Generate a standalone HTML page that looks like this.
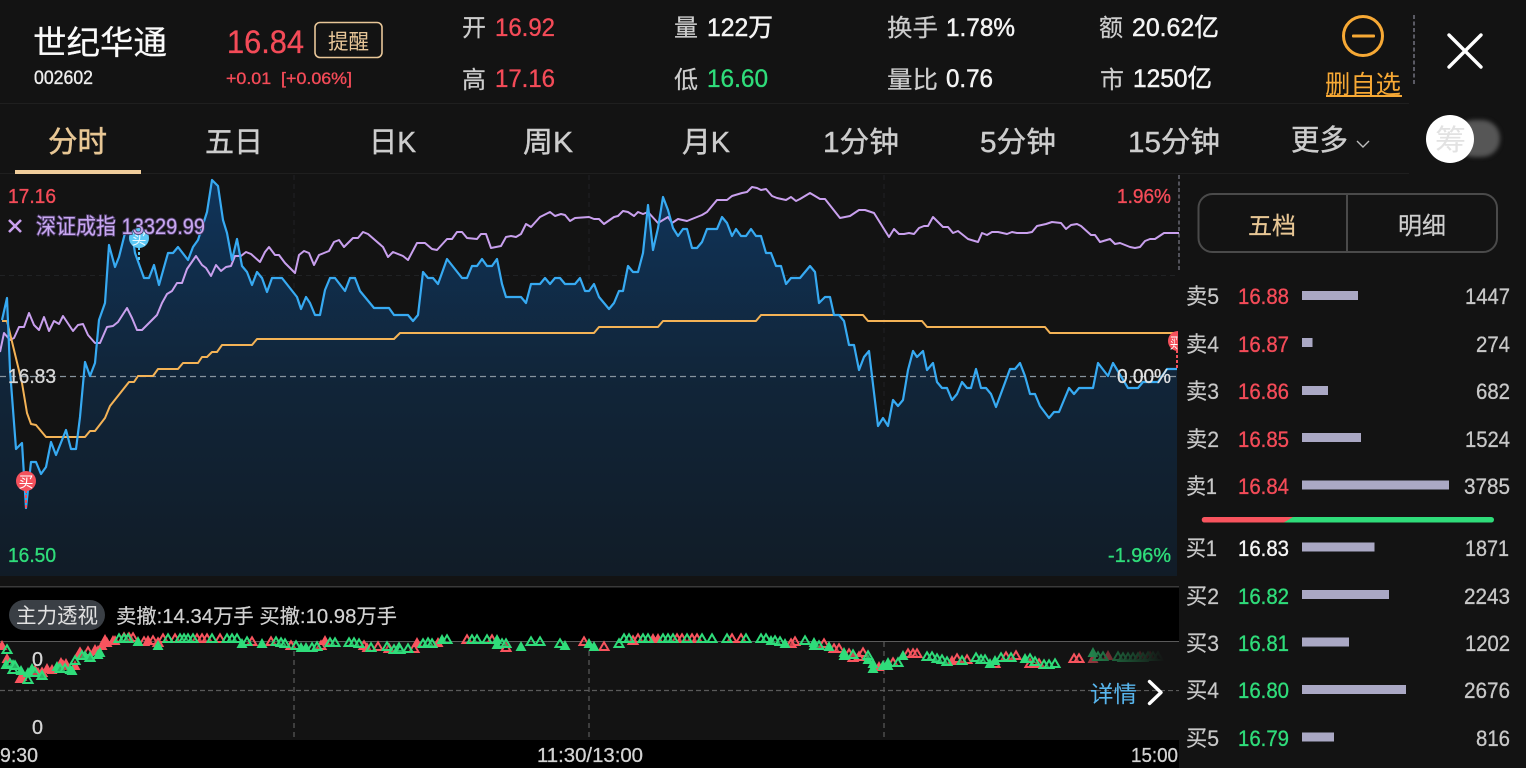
<!DOCTYPE html>
<html lang="zh"><head><meta charset="utf-8"><title>世纪华通</title>
<style>
html,body{margin:0;padding:0;background:#131313;width:1526px;height:768px;overflow:hidden}
svg{display:block;position:absolute;left:0;top:0}
text{font-family:"Liberation Sans","Noto Sans CJK SC",sans-serif}
.l{fill:#cdcdcd;font-size:24px;stroke:#cdcdcd;stroke-width:.2}
.v{fill:#f4f4f4;font-size:25px;stroke:#f4f4f4;stroke-width:.5}
.r{fill:#f44b58;stroke:#f44b58;stroke-width:.35}
.g{fill:#2fdc7a;stroke:#2fdc7a;stroke-width:.35}
.t{fill:#cdcdcd;font-size:29px;stroke:#cdcdcd;stroke-width:.4}
.ob{fill:#c8c8c8;font-size:22px;stroke:#c8c8c8;stroke-width:.2}
.q{fill:#c8c8c8;font-size:22px;stroke:#c8c8c8;stroke-width:.3}
.pr{font-size:22px}
.bar{fill:#aaa8c4}
.m{fill:none;stroke:none}
.gh{marker:url(#gh)}.gs{marker:url(#gs)}.rh{marker:url(#rh)}.rs{marker:url(#rs)}
</style></head><body>
<svg width="1526" height="768" viewBox="0 0 1526 768" xmlns="http://www.w3.org/2000/svg">
<defs>
<linearGradient id="fill" gradientUnits="userSpaceOnUse" x1="0" y1="180" x2="0" y2="576"><stop offset="0" stop-color="#10345a"/><stop offset=".5" stop-color="#112539"/><stop offset="1" stop-color="#111c27"/></linearGradient>
<linearGradient id="fade" x1="0" y1="0" x2="1" y2="0"><stop offset="0" stop-color="#131313" stop-opacity=".4"/><stop offset=".85" stop-color="#131313" stop-opacity="1"/></linearGradient>
<marker id="gh" markerUnits="userSpaceOnUse" markerWidth="12" markerHeight="12" refX="6" refY="5.500" overflow="visible"><path d="M6 1.800 10.500 9.500H1.500Z" fill="#131313" fill-opacity=".2" stroke="#2fdc7a" stroke-width="2"/></marker>
<marker id="gs" markerUnits="userSpaceOnUse" markerWidth="12" markerHeight="12" refX="6" refY="5.500" overflow="visible"><path d="M6 .5 11.500 10.500H.5Z" fill="#2fdc7a"/></marker>
<marker id="rh" markerUnits="userSpaceOnUse" markerWidth="12" markerHeight="12" refX="6" refY="5.500" overflow="visible"><path d="M6 1.800 10.500 9.500H1.500Z" fill="#131313" fill-opacity=".2" stroke="#f8545e" stroke-width="2"/></marker>
<marker id="rs" markerUnits="userSpaceOnUse" markerWidth="12" markerHeight="12" refX="6" refY="5.500" overflow="visible"><path d="M6 .5 11.500 10.500H.5Z" fill="#f8545e"/></marker>
</defs>

<rect width="1526" height="768" fill="#131313"/>
<!-- dividers -->
<rect x="0" y="103" width="1409" height="1" fill="#1f1f1f"/>
<rect x="0" y="173" width="1409" height="1" fill="#1f1f1f"/>

<!-- header -->
<text x="33" y="54" font-size="33" fill="#fafafa" stroke="#fafafa" stroke-width=".25" textLength="134" lengthAdjust="spacingAndGlyphs">世纪华通</text>
<text x="34" y="84" font-size="19" fill="#eee" stroke="#eee" stroke-width=".35" textLength="59" lengthAdjust="spacingAndGlyphs">002602</text>
<text x="227" y="53" font-size="32" class="r" textLength="77" lengthAdjust="spacingAndGlyphs">16.84</text>
<rect x="315" y="22.500" width="67" height="35" rx="5" fill="none" stroke="#e8c698" stroke-width="1.600"/>
<text x="328" y="49" font-size="21" fill="#e8c698" textLength="41" lengthAdjust="spacingAndGlyphs">提醒</text>
<text x="226" y="84" font-size="17" class="r" textLength="126" lengthAdjust="spacingAndGlyphs" xml:space="preserve">+0.01  [+0.06%]</text>

<text x="462" y="36" class="l">开</text><text x="495" y="36" font-size="25" class="r" textLength="60" lengthAdjust="spacingAndGlyphs">16.92</text>
<text x="462" y="88" class="l">高</text><text x="495" y="87" font-size="25" class="r" textLength="60" lengthAdjust="spacingAndGlyphs">17.16</text>
<text x="674" y="36" class="l">量</text><text x="707" y="36" class="v" textLength="66" lengthAdjust="spacingAndGlyphs">122万</text>
<text x="674" y="88" class="l">低</text><text x="707" y="87" font-size="25" class="g" textLength="61" lengthAdjust="spacingAndGlyphs">16.60</text>
<text x="887" y="36" class="l" textLength="51" lengthAdjust="spacingAndGlyphs">换手</text><text x="946" y="36" class="v" textLength="69" lengthAdjust="spacingAndGlyphs">1.78%</text>
<text x="887" y="88" class="l" textLength="51" lengthAdjust="spacingAndGlyphs">量比</text><text x="946" y="87" class="v" textLength="47" lengthAdjust="spacingAndGlyphs">0.76</text>
<text x="1099" y="36" class="l">额</text><text x="1132" y="36" class="v" textLength="87" lengthAdjust="spacingAndGlyphs">20.62亿</text>
<text x="1100" y="88" class="l">市</text><text x="1133" y="87" class="v" textLength="79" lengthAdjust="spacingAndGlyphs">1250亿</text>

<circle cx="1363" cy="36" r="19.500" fill="none" stroke="#f7a935" stroke-width="3"/>
<rect x="1352" y="34.500" width="23" height="3" rx="1" fill="#f7a935"/>
<text x="1325" y="93" font-size="25" fill="#f7a935" textLength="76" lengthAdjust="spacingAndGlyphs">删自选</text>
<rect x="1326" y="95" width="76" height="2" fill="#f7a935"/>
<path d="M1414 15V86" stroke="#6d6d78" stroke-width="1.600" stroke-dasharray="4 2.500"/>
<path d="M1449 35 1481 67M1481 35 1449 67" stroke="#fff" stroke-width="3.400" stroke-linecap="round"/>

<!-- tabs -->
<text x="48" y="152" font-size="29.500" fill="#e8c795" stroke="#e8c795" stroke-width=".5" textLength="59" lengthAdjust="spacingAndGlyphs">分时</text>
<rect x="15" y="170" width="126" height="4" fill="#f0cd9b"/>
<text x="205" y="152" class="t" textLength="58">五日</text>
<text x="369" y="152" class="t" textLength="47" lengthAdjust="spacingAndGlyphs">日K</text>
<text x="523" y="152" class="t" textLength="50" lengthAdjust="spacingAndGlyphs">周K</text>
<text x="682" y="152" class="t" textLength="48" lengthAdjust="spacingAndGlyphs">月K</text>
<text x="823" y="152" class="t" textLength="76" lengthAdjust="spacingAndGlyphs">1分钟</text>
<text x="980" y="152" class="t" textLength="76" lengthAdjust="spacingAndGlyphs">5分钟</text>
<text x="1128" y="152" class="t" textLength="92" lengthAdjust="spacingAndGlyphs">15分钟</text>
<text x="1291" y="150" class="t" textLength="57" lengthAdjust="spacingAndGlyphs">更多</text>
<path d="M1357 141 1363 147 1369 141" fill="none" stroke="#bdbdbd" stroke-width="1.400"/>
<rect x="1456" y="120" width="44" height="37" rx="18" fill="#565656" style="filter:blur(2px)"/>
<circle cx="1450" cy="139" r="24" fill="#fff"/>
<text x="1435" y="150" font-size="29" fill="#e2e2e2" textLength="31" lengthAdjust="spacingAndGlyphs">筹</text>

<!-- chart area -->
<g stroke="#202224" stroke-width="1" stroke-dasharray="5 4">
<path d="M294 175V576M589 175V576M884 175V576"/>
<path d="M0 275.500H1178M0 476.500H1178"/>
</g>
<polygon fill="url(#fill)" points="0,576 0,320 2,320 7,298 10,370 16,449 22,443 26,508 31,462 36,462 41,474 46,467 51,442 56,455 66,430 71,449 76,449 80,417 85,362 90,376 95,363 99,320 105,303 109,245 115,267 119,257 125,233 132,233 135,253 144,278 149,278 154,265 159,285 168,253 173,253 178,247 188,260 193,247 198,240 207,212 212,180 218,186 223,220 227,233 232,260 237,239 242,266 247,272 252,285 257,272 262,278 267,292 272,278 282,278 297,297 301,309 306,297 310,303 315,315 320,315 325,290 330,278 335,278 345,291 350,278 355,278 360,291 374,308 389,308 394,315 408,315 413,321 418,315 423,272 428,278 433,278 438,284 447,259 462,278 467,278 472,266 477,266 482,259 487,266 492,266 497,259 502,284 506,297 521,297 526,303 531,284 540,284 545,278 550,284 555,278 560,278 565,284 575,284 580,278 585,291 589,291 594,284 599,297 609,309 614,303 619,291 623,291 628,266 633,272 638,272 643,253 648,205 653,250 658,228 663,197 668,210 673,228 678,236 683,229 687,229 692,248 697,248 702,242 707,229 717,229 722,217 727,223 732,236 736,229 741,236 746,236 751,229 756,236 761,236 766,253 771,253 776,266 781,266 786,284 791,278 800,278 810,266 815,272 819,303 825,297 830,297 834,315 839,315 844,321 849,345 854,345 859,370 864,357 869,351 878,426 883,418 888,426 893,400 898,406 903,400 908,370 913,351 917,357 923,351 927,370 933,363 937,382 942,388 947,388 952,400 957,394 962,382 967,388 971,388 976,369 981,388 986,388 991,394 996,407 1010,369 1015,369 1020,363 1025,376 1030,394 1035,394 1040,406 1049,418 1054,412 1059,412 1069,388 1074,394 1079,388 1093,388 1098,363 1108,376 1113,363 1128,388 1138,388 1143,382 1158,382 1167,369 1177,369 1177,576"/>
<path d="M0 376.500H1178" stroke="#87949e" stroke-width="1.300" stroke-dasharray="6 4"/>
<path d="M1179 175V272" stroke="#6d6d78" stroke-width="1.400" stroke-dasharray="4 2.500"/>
<polyline fill="none" stroke="#c9a0ee" stroke-width="2" stroke-linejoin="round" points="0,352 4,333 10,340 14,338 19,327 24,327 29,313 34,325 39,330 44,317 49,331 54,321 59,324 63,316 73,331 78,325 83,324 88,335 95,343 100,343 107,327 113,326 118,322 127,308 132,318 137,330 142,330 157,315 162,303 167,294 172,291 177,283 182,283 187,269 196,256 202,265 206,268 211,276 216,265 221,271 226,267 231,266 235,256 241,256 246,252 251,254 260,262 265,252 269,247 275,255 279,255 285,263 289,267 295,273 299,255 304,251 309,253 314,265 319,255 324,253 329,251 334,242 339,240 344,247 353,238 358,238 363,232 368,234 383,247 388,257 393,252 403,256 408,260 417,243 425,243 432,249 437,250 447,239 452,239 457,232 462,232 467,238 477,239 481,234 486,234 491,248 501,246 506,237 511,236 516,237 521,234 526,224 531,227 540,217 550,212 555,216 561,214 565,215 570,221 575,218 589,217 594,219 599,219 604,224 614,217 618,216 623,211 628,212 634,216 638,212 643,214 648,212 658,223 668,217 672,223 678,219 687,221 702,215 707,212 717,200 727,200 732,196 742,193 747,192 752,187 757,188 761,190 766,189 772,196 777,198 786,200 791,197 796,201 800,199 810,193 820,199 825,199 840,218 850,216 859,210 865,210 874,213 889,237 894,229 899,234 904,234 909,233 914,234 919,228 924,226 928,226 933,217 943,227 948,227 953,233 958,231 968,239 978,242 982,233 987,235 992,232 998,232 1007,234 1012,232 1017,233 1027,233 1032,232 1037,226 1046,224 1052,222 1061,223 1066,229 1071,225 1077,224 1081,226 1091,235 1095,235 1100,242 1110,239 1115,244 1120,243 1130,247 1135,248 1140,247 1145,241 1150,239 1155,239 1164,233 1179,233"/>
<polyline fill="none" stroke="#f4b356" stroke-width="2" stroke-linejoin="round" points="2,321 7,321 22,383 27,413 31,424 36,425 46,437 85,437 90,431 95,431 105,418 110,406 129,382 134,382 138,376 153,376 158,369 178,369 183,363 198,363 202,357 207,357 212,352 217,352 222,345 252,345 257,339 394,339 400,333 594,333 599,327 658,327 663,321 756,321 761,315 863,315 868,321 922,321 927,327 1045,327 1050,333 1177,333"/>
<polyline fill="none" stroke="#37aaf2" stroke-width="2.200" stroke-linejoin="round" points="2,320 7,298 10,370 16,449 22,443 26,508 31,462 36,462 41,474 46,467 51,442 56,455 66,430 71,449 76,449 80,417 85,362 90,376 95,363 99,320 105,303 109,245 115,267 119,257 125,233 132,233 135,253 144,278 149,278 154,265 159,285 168,253 173,253 178,247 188,260 193,247 198,240 207,212 212,180 218,186 223,220 227,233 232,260 237,239 242,266 247,272 252,285 257,272 262,278 267,292 272,278 282,278 297,297 301,309 306,297 310,303 315,315 320,315 325,290 330,278 335,278 345,291 350,278 355,278 360,291 374,308 389,308 394,315 408,315 413,321 418,315 423,272 428,278 433,278 438,284 447,259 462,278 467,278 472,266 477,266 482,259 487,266 492,266 497,259 502,284 506,297 521,297 526,303 531,284 540,284 545,278 550,284 555,278 560,278 565,284 575,284 580,278 585,291 589,291 594,284 599,297 609,309 614,303 619,291 623,291 628,266 633,272 638,272 643,253 648,205 653,250 658,228 663,197 668,210 673,228 678,236 683,229 687,229 692,248 697,248 702,242 707,229 717,229 722,217 727,223 732,236 736,229 741,236 746,236 751,229 756,236 761,236 766,253 771,253 776,266 781,266 786,284 791,278 800,278 810,266 815,272 819,303 825,297 830,297 834,315 839,315 844,321 849,345 854,345 859,370 864,357 869,351 878,426 883,418 888,426 893,400 898,406 903,400 908,370 913,351 917,357 923,351 927,370 933,363 937,382 942,388 947,388 952,400 957,394 962,382 967,388 971,388 976,369 981,388 986,388 991,394 996,407 1010,369 1015,369 1020,363 1025,376 1030,394 1035,394 1040,406 1049,418 1054,412 1059,412 1069,388 1074,394 1079,388 1093,388 1098,363 1108,376 1113,363 1128,388 1138,388 1143,382 1158,382 1167,369 1177,369"/>

<!-- buy/sell markers -->
<path d="M26 490V510" stroke="#f4515c" stroke-width="2" stroke-dasharray="3 2"/>
<circle cx="26" cy="481" r="10" fill="#f4515c"/>
<text x="18.500" y="487" font-size="15" fill="#fff">买</text>
<path d="M139 247V262" stroke="#5cc8f5" stroke-width="2" stroke-dasharray="3 2"/>
<circle cx="139" cy="238" r="10" fill="#5cc8f5"/>
<text x="131.500" y="244" font-size="15" fill="#e8f8ff">买</text>
<path d="M1177 350V370" stroke="#f4515c" stroke-width="2" stroke-dasharray="3 2"/>
<path d="M1178 331A10 10 0 1 0 1178 351Z" fill="#f4515c"/>
<text x="1170" y="348" font-size="15" fill="#fff" textLength="8" lengthAdjust="spacingAndGlyphs">买</text>

<!-- chart labels -->
<text x="8" y="203" font-size="20" class="r" textLength="48" lengthAdjust="spacingAndGlyphs">17.16</text>
<path d="M9 220 21 232M21 220 9 232" stroke="#c9a0ee" stroke-width="2.600"/>
<text x="36" y="234" font-size="22" fill="#c9a8f0" stroke="#4d3b68" stroke-width="1.800" paint-order="stroke" textLength="169" lengthAdjust="spacingAndGlyphs">深证成指 13329.99</text>
<text x="8" y="383" font-size="20" fill="#d6d6d6" stroke="#d6d6d6" stroke-width=".3" textLength="48" lengthAdjust="spacingAndGlyphs">16.83</text>
<text x="8" y="562" font-size="20" class="g" textLength="48" lengthAdjust="spacingAndGlyphs">16.50</text>
<text x="1117" y="203" font-size="20" class="r" textLength="54" lengthAdjust="spacingAndGlyphs">1.96%</text>
<text x="1117" y="383" font-size="20" fill="#e2e2e2" stroke="#e2e2e2" stroke-width=".3" textLength="54" lengthAdjust="spacingAndGlyphs">0.00%</text>
<text x="1108" y="562" font-size="20" class="g" textLength="63" lengthAdjust="spacingAndGlyphs">-1.96%</text>

<!-- lower chart -->
<rect x="0" y="586" width="1179" height="55" fill="#000"/>
<rect x="0" y="586" width="1179" height="1.500" fill="#3a3a3a"/>
<rect x="0" y="641" width="1179" height="1" fill="#5a5a5a"/>
<rect x="0" y="740" width="1179" height="28" fill="#000"/>
<path d="M294 642V740M589 642V740M884 642V740" stroke="#5a5a5a" stroke-width="1.200" stroke-dasharray="5 4"/>
<path d="M0 690.500H1179" stroke="#5a5a5a" stroke-width="1.200" stroke-dasharray="5 3"/>
<rect x="9" y="600" width="96" height="30" rx="15" fill="#3a3f45"/>
<text x="16" y="623" font-size="21" fill="#e2e2e2" textLength="82" lengthAdjust="spacingAndGlyphs">主力透视</text>
<text x="116" y="623" font-size="20" fill="#d2d2d2" stroke="#d2d2d2" stroke-width=".2" textLength="281" lengthAdjust="spacingAndGlyphs">卖撤:14.34万手 买撤:10.98万手</text>

<polyline class="m rh" points="35,670 42,672 63,665 80,652 88,651 124,637 129,637 133,637 144,641 153,640 158,642 163,638 175,638 197,638 202,638 207,638 220,638 252,641 271,641 291,645 321,645 364,645 378,646 389,648 414,648 467,639 492,639 506,647 584,641 604,646 633,640 638,638 677,638 682,638 692,638 697,638 732,638 741,638 795,641 791,643 824,643 834,648 839,648 849,653 853,657 859,656 863,652 893,662 908,653 913,653 917,653 957,658 967,659 995,663 1006,656 1016,655 1030,663 1039,663 1074,658 1079,658 1140,656 1150,656 1158,656"/>
<polyline class="m rs" points="2,645 7,658 20,678 22,676 38,672 47,668 52,669 61,662 66,663 75,665 80,654 95,649 98,650 102,645 105,639 107,642 113,640 115,640 148,640 325,640 367,647 417,642 438,642 653,638 658,638 879,666 952,660 1093,658 1108,655"/>
<polyline class="m gs" points="6,664 13,664 21,670 28,672 32,668 42,675 57,666 70,669 72,670 85,655 90,656 98,654 100,652 138,641 158,645 242,643 262,643 301,647 306,647 442,639 497,639 497,644 521,646 565,645 589,643 594,646 771,640 785,643 814,642 814,645 829,646 844,652 844,655 868,659 873,663 873,668 883,665 888,662 888,665 903,655 990,663 995,660 1025,658 1093,652"/>
<polyline class="m gh" points="7,649 10,663 13,669 15,665 28,679 35,672 42,675 60,668 65,668 75,660 82,655 90,657 119,638 124,638 128,638 168,638 180,638 184,638 188,638 193,638 212,638 227,638 232,638 237,638 247,641 276,641 281,642 285,643 296,645 312,647 317,646 330,642 335,642 349,642 354,642 359,643 371,647 387,646 394,649 399,647 400,649 408,648 423,643 428,642 432,643 447,639 472,639 477,639 487,639 502,643 506,643 531,641 540,641 560,643 619,643 624,638 629,638 643,638 648,638 663,638 668,638 673,638 687,638 702,638 712,638 727,638 746,638 761,638 766,638 775,640 780,641 805,640 819,645 853,654 868,655 898,662 927,656 932,656 937,658 942,659 947,661 962,660 976,657 981,659 985,659 1001,657 1011,657 1030,658 1035,661 1044,664 1049,664 1055,663 1098,656 1103,656 1118,656 1123,657 1128,657 1133,657 1138,657 1143,657 1148,656 1153,656 1158,656"/>
<rect x="1085" y="642" width="94" height="48" fill="url(#fade)"/>

<text x="32" y="666" font-size="20" fill="#d6d6d6" stroke="#d6d6d6" stroke-width=".3" textLength="11" lengthAdjust="spacingAndGlyphs">0</text>
<text x="32" y="734" font-size="20" fill="#d6d6d6" stroke="#d6d6d6" stroke-width=".3" textLength="11" lengthAdjust="spacingAndGlyphs">0</text>
<text x="1090" y="702" font-size="23" fill="#58b6ee" textLength="47" lengthAdjust="spacingAndGlyphs">详情</text>
<path d="M1149.500 681.500 1161 692.500 1149.500 703.500" fill="none" stroke="#fff" stroke-width="3.400" stroke-linecap="round" stroke-linejoin="round"/>
<text x="0" y="762" font-size="20" fill="#d2d2d2" stroke="#d2d2d2" stroke-width=".3" textLength="38" lengthAdjust="spacingAndGlyphs">9:30</text>
<text x="537" y="762" font-size="20" fill="#d2d2d2" stroke="#d2d2d2" stroke-width=".3" textLength="106" lengthAdjust="spacingAndGlyphs">11:30/13:00</text>
<text x="1131" y="762" font-size="20" fill="#d2d2d2" stroke="#d2d2d2" stroke-width=".3" textLength="47" lengthAdjust="spacingAndGlyphs">15:00</text>

<!-- right panel -->
<rect x="1198.500" y="194" width="298.500" height="58" rx="14" fill="none" stroke="#4a4a4a" stroke-width="2"/>
<rect x="1346" y="194" width="2" height="58" fill="#4a4a4a"/>
<text x="1248" y="234" font-size="24" fill="#e8c795" stroke="#e8c795" stroke-width=".2">五档</text>
<text x="1398" y="234" font-size="24" fill="#cdcdcd" stroke="#cdcdcd" stroke-width=".2">明细</text>

<text x="1186" y="304" class="ob" textLength="33" lengthAdjust="spacingAndGlyphs">卖5</text><text x="1238" y="304" class="pr r" textLength="51" lengthAdjust="spacingAndGlyphs">16.88</text><rect class="bar" x="1302" y="291" width="56" height="9"/><text x="1465" y="304" class="q" textLength="45" lengthAdjust="spacingAndGlyphs">1447</text>
<text x="1186" y="352" class="ob" textLength="33" lengthAdjust="spacingAndGlyphs">卖4</text><text x="1238" y="352" class="pr r" textLength="51" lengthAdjust="spacingAndGlyphs">16.87</text><rect class="bar" x="1302" y="338" width="10.500" height="9"/><text x="1476" y="352" class="q" textLength="34" lengthAdjust="spacingAndGlyphs">274</text>
<text x="1186" y="399" class="ob" textLength="33" lengthAdjust="spacingAndGlyphs">卖3</text><text x="1238" y="399" class="pr r" textLength="51" lengthAdjust="spacingAndGlyphs">16.86</text><rect class="bar" x="1302" y="386" width="26" height="9"/><text x="1476" y="399" class="q" textLength="34" lengthAdjust="spacingAndGlyphs">682</text>
<text x="1186" y="447" class="ob" textLength="33" lengthAdjust="spacingAndGlyphs">卖2</text><text x="1238" y="447" class="pr r" textLength="51" lengthAdjust="spacingAndGlyphs">16.85</text><rect class="bar" x="1302" y="433" width="59" height="9"/><text x="1465" y="447" class="q" textLength="45" lengthAdjust="spacingAndGlyphs">1524</text>
<text x="1186" y="494" class="ob" textLength="31" lengthAdjust="spacingAndGlyphs">卖1</text><text x="1238" y="494" class="pr r" textLength="51" lengthAdjust="spacingAndGlyphs">16.84</text><rect class="bar" x="1302" y="480.500" width="147" height="9"/><text x="1464" y="494" class="q" textLength="46" lengthAdjust="spacingAndGlyphs">3785</text>

<rect x="1202" y="517" width="292" height="5.500" rx="2.700" fill="#2fdc7a"/>
<path d="M1204.500 517H1293L1284 522.500H1204.500A2.700 2.700 0 0 1 1204.500 517Z" fill="#f8545e"/>

<text x="1186" y="556" class="ob" textLength="31" lengthAdjust="spacingAndGlyphs">买1</text><text x="1238" y="556" class="pr" fill="#f5f5f5" stroke="#f5f5f5" stroke-width=".35" textLength="51" lengthAdjust="spacingAndGlyphs">16.83</text><rect class="bar" x="1302" y="542.500" width="72.500" height="9"/><text x="1465" y="556" class="q" textLength="44" lengthAdjust="spacingAndGlyphs">1871</text>
<text x="1186" y="604" class="ob" textLength="33" lengthAdjust="spacingAndGlyphs">买2</text><text x="1238" y="604" class="pr g" textLength="51" lengthAdjust="spacingAndGlyphs">16.82</text><rect class="bar" x="1302" y="590" width="87" height="9"/><text x="1464" y="604" class="q" textLength="46" lengthAdjust="spacingAndGlyphs">2243</text>
<text x="1186" y="651" class="ob" textLength="33" lengthAdjust="spacingAndGlyphs">买3</text><text x="1238" y="651" class="pr g" textLength="51" lengthAdjust="spacingAndGlyphs">16.81</text><rect class="bar" x="1302" y="637.500" width="47" height="9"/><text x="1465" y="651" class="q" textLength="45" lengthAdjust="spacingAndGlyphs">1202</text>
<text x="1186" y="698" class="ob" textLength="33" lengthAdjust="spacingAndGlyphs">买4</text><text x="1238" y="698" class="pr g" textLength="51" lengthAdjust="spacingAndGlyphs">16.80</text><rect class="bar" x="1302" y="685" width="104" height="9"/><text x="1464" y="698" class="q" textLength="46" lengthAdjust="spacingAndGlyphs">2676</text>
<text x="1186" y="746" class="ob" textLength="33" lengthAdjust="spacingAndGlyphs">买5</text><text x="1238" y="746" class="pr g" textLength="51" lengthAdjust="spacingAndGlyphs">16.79</text><rect class="bar" x="1302" y="732.500" width="32" height="9"/><text x="1476" y="746" class="q" textLength="34" lengthAdjust="spacingAndGlyphs">816</text>
</svg>
</body></html>
